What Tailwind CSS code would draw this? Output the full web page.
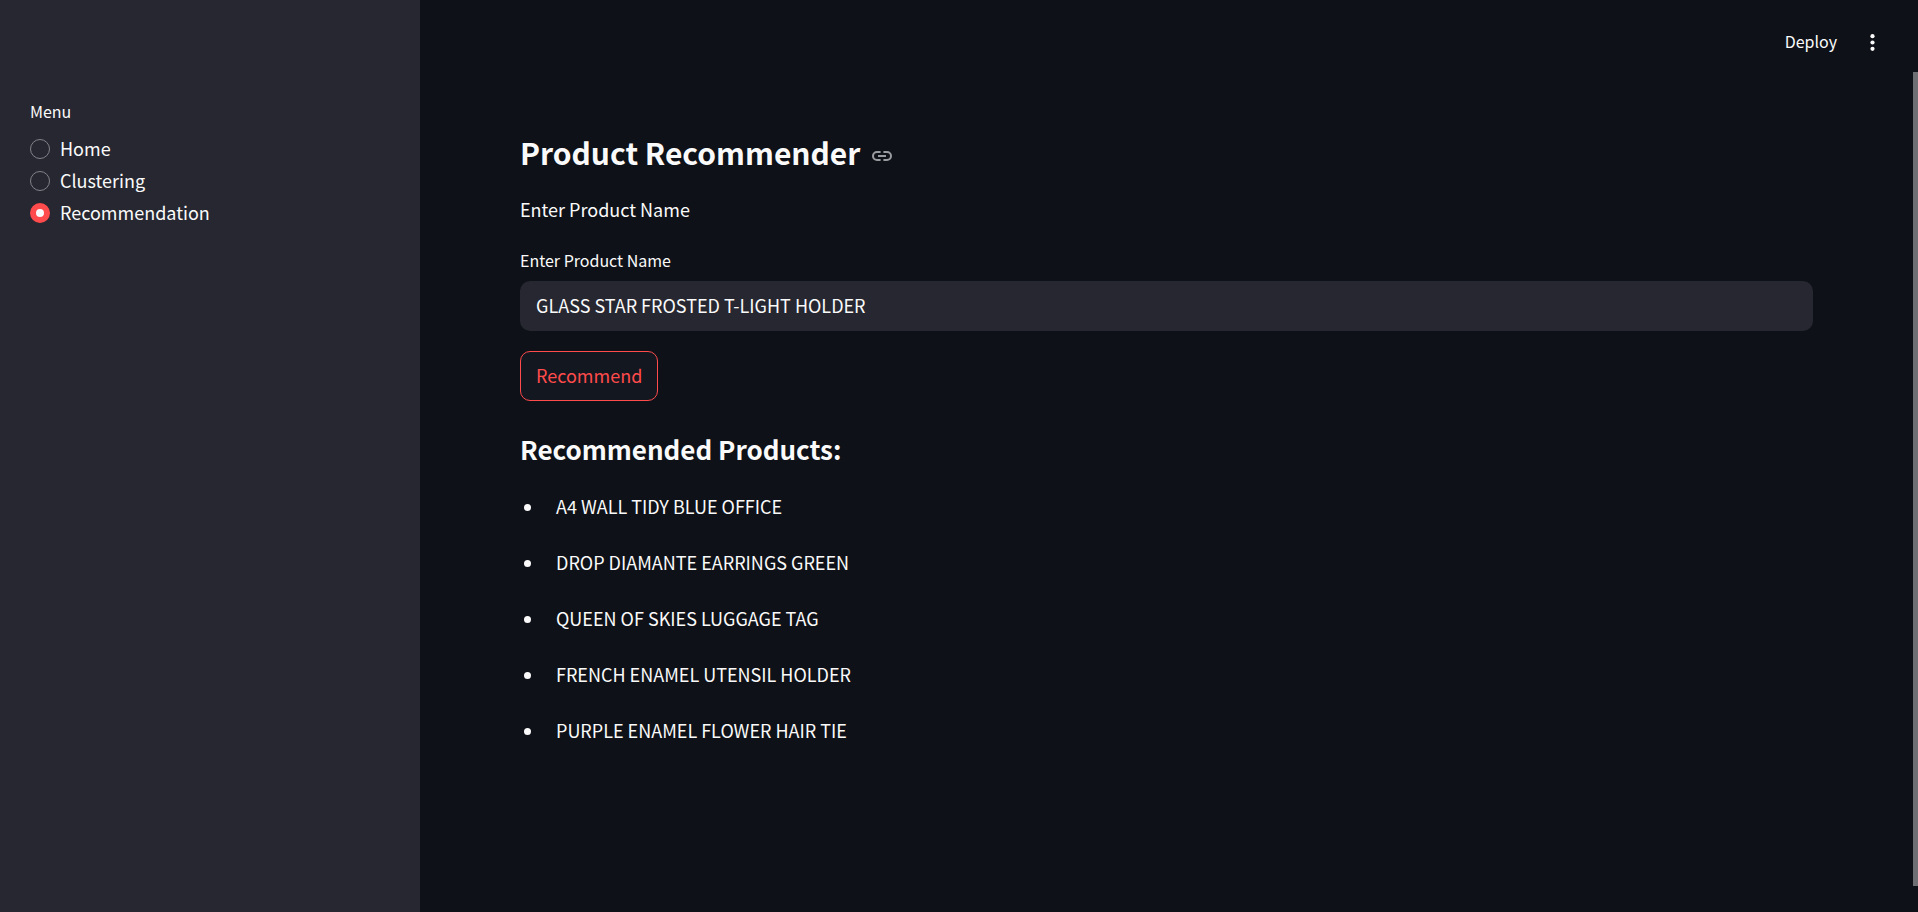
<!DOCTYPE html>
<html lang="en">
<head>
<meta charset="utf-8">
<meta name="viewport" content="width=device-width, initial-scale=1">
<title>Product Recommender</title>
<script src="https://cdn.jsdelivr.net/npm/@tailwindcss/browser@4"></script>
</head>
<body class="flex min-h-screen bg-[#0e1117] font-['Noto_Sans_CJK_SC',sans-serif] text-[18px] leading-8 text-[#fafafa]">
  <aside class="w-[420px] shrink-0 bg-[#262730] px-[30px] pt-[95px]">
    <fieldset>
      <legend class="text-base leading-8">Menu</legend>
      <div class="flex flex-col pt-[5px]">
        <label class="flex items-center gap-[10px]">
          <input type="radio" name="menu" class="mt-0.5 size-5 appearance-none rounded-full border border-[#83848a] checked:border-[6px] checked:border-[#ff4b4b] checked:bg-[#fafafa]">
          Home
        </label>
        <label class="flex items-center gap-[10px]">
          <input type="radio" name="menu" class="mt-0.5 size-5 appearance-none rounded-full border border-[#83848a] checked:border-[6px] checked:border-[#ff4b4b] checked:bg-[#fafafa]">
          Clustering
        </label>
        <label class="flex items-center gap-[10px]">
          <input type="radio" name="menu" checked class="mt-0.5 size-5 appearance-none rounded-full border border-[#83848a] checked:border-[6px] checked:border-[#ff4b4b] checked:bg-[#fafafa]">
          Recommendation
        </label>
      </div>
    </fieldset>
  </aside>

  <div class="relative flex min-w-0 grow flex-col pr-[5px]">
    <header class="flex items-center justify-end gap-[25px] pt-[25px] pr-[31px]">
      <button type="button" class="pb-0.5 text-base leading-8">Deploy</button>
      <button type="button" aria-label="Main menu" class="flex size-5 items-center justify-center">
        <svg viewBox="0 0 20 20" class="size-5" fill="currentColor" aria-hidden="true">
          <circle cx="10.5" cy="4.2" r="2.1"/><circle cx="10.5" cy="10.5" r="2.1"/><circle cx="10.5" cy="16.8" r="2.1"/>
        </svg>
      </button>
    </header>

    <main class="flex flex-col px-[100px] pt-[70px]">
      <h2 class="flex items-center gap-3 pb-0.5 text-[30px] leading-[46px] font-bold">
        Product Recommender
        <a href="#product-recommender" aria-label="Link to heading" class="text-[#9a9b9f]">
          <svg viewBox="0 0 20 10" class="mt-2 h-[10px] w-5" fill="none" stroke="currentColor" stroke-width="2" aria-hidden="true">
            <path d="M8.6 1H5a4 4 0 0 0 0 8h3.6M11.4 1H15a4 4 0 0 1 0 8h-3.6M6 5h8"/>
          </svg>
        </a>
      </h2>
      <p class="pt-4">Enter Product Name</p>
      <label for="product" class="pt-[19px] text-base leading-8">Enter Product Name</label>
      <input id="product" type="text" value="GLASS STAR FROSTED T-LIGHT HOLDER" class="mt-[5px] h-[50px] w-full rounded-[10px] bg-[#262730] px-4 pb-0.5 outline-none">
      <button type="button" class="mt-5 h-[50px] self-start rounded-[10px] border border-[#ff4b4b] bg-[#131720] px-[15px] pb-0.5 text-[#ff4b4b]">Recommend</button>
      <h3 class="pt-[30px] text-[26px] leading-9 font-bold">Recommended Products:</h3>
      <ul class="flex flex-col gap-6 pt-[23px]">
        <li class="flex items-center gap-[25px] pl-1 before:mt-0.5 before:size-[7px] before:rounded-full before:bg-[#fafafa]">A4 WALL TIDY BLUE OFFICE</li>
        <li class="flex items-center gap-[25px] pl-1 before:mt-0.5 before:size-[7px] before:rounded-full before:bg-[#fafafa]">DROP DIAMANTE EARRINGS GREEN</li>
        <li class="flex items-center gap-[25px] pl-1 before:mt-0.5 before:size-[7px] before:rounded-full before:bg-[#fafafa]">QUEEN OF SKIES LUGGAGE TAG</li>
        <li class="flex items-center gap-[25px] pl-1 before:mt-0.5 before:size-[7px] before:rounded-full before:bg-[#fafafa]">FRENCH ENAMEL UTENSIL HOLDER</li>
        <li class="flex items-center gap-[25px] pl-1 before:mt-0.5 before:size-[7px] before:rounded-full before:bg-[#fafafa]">PURPLE ENAMEL FLOWER HAIR TIE</li>
      </ul>
    </main>

    <!-- scroll thumb -->
    <div class="absolute top-[72px] right-0 bottom-[26px] w-[5px] bg-[#6e6f73]"></div>
  </div>
</body>
</html>
